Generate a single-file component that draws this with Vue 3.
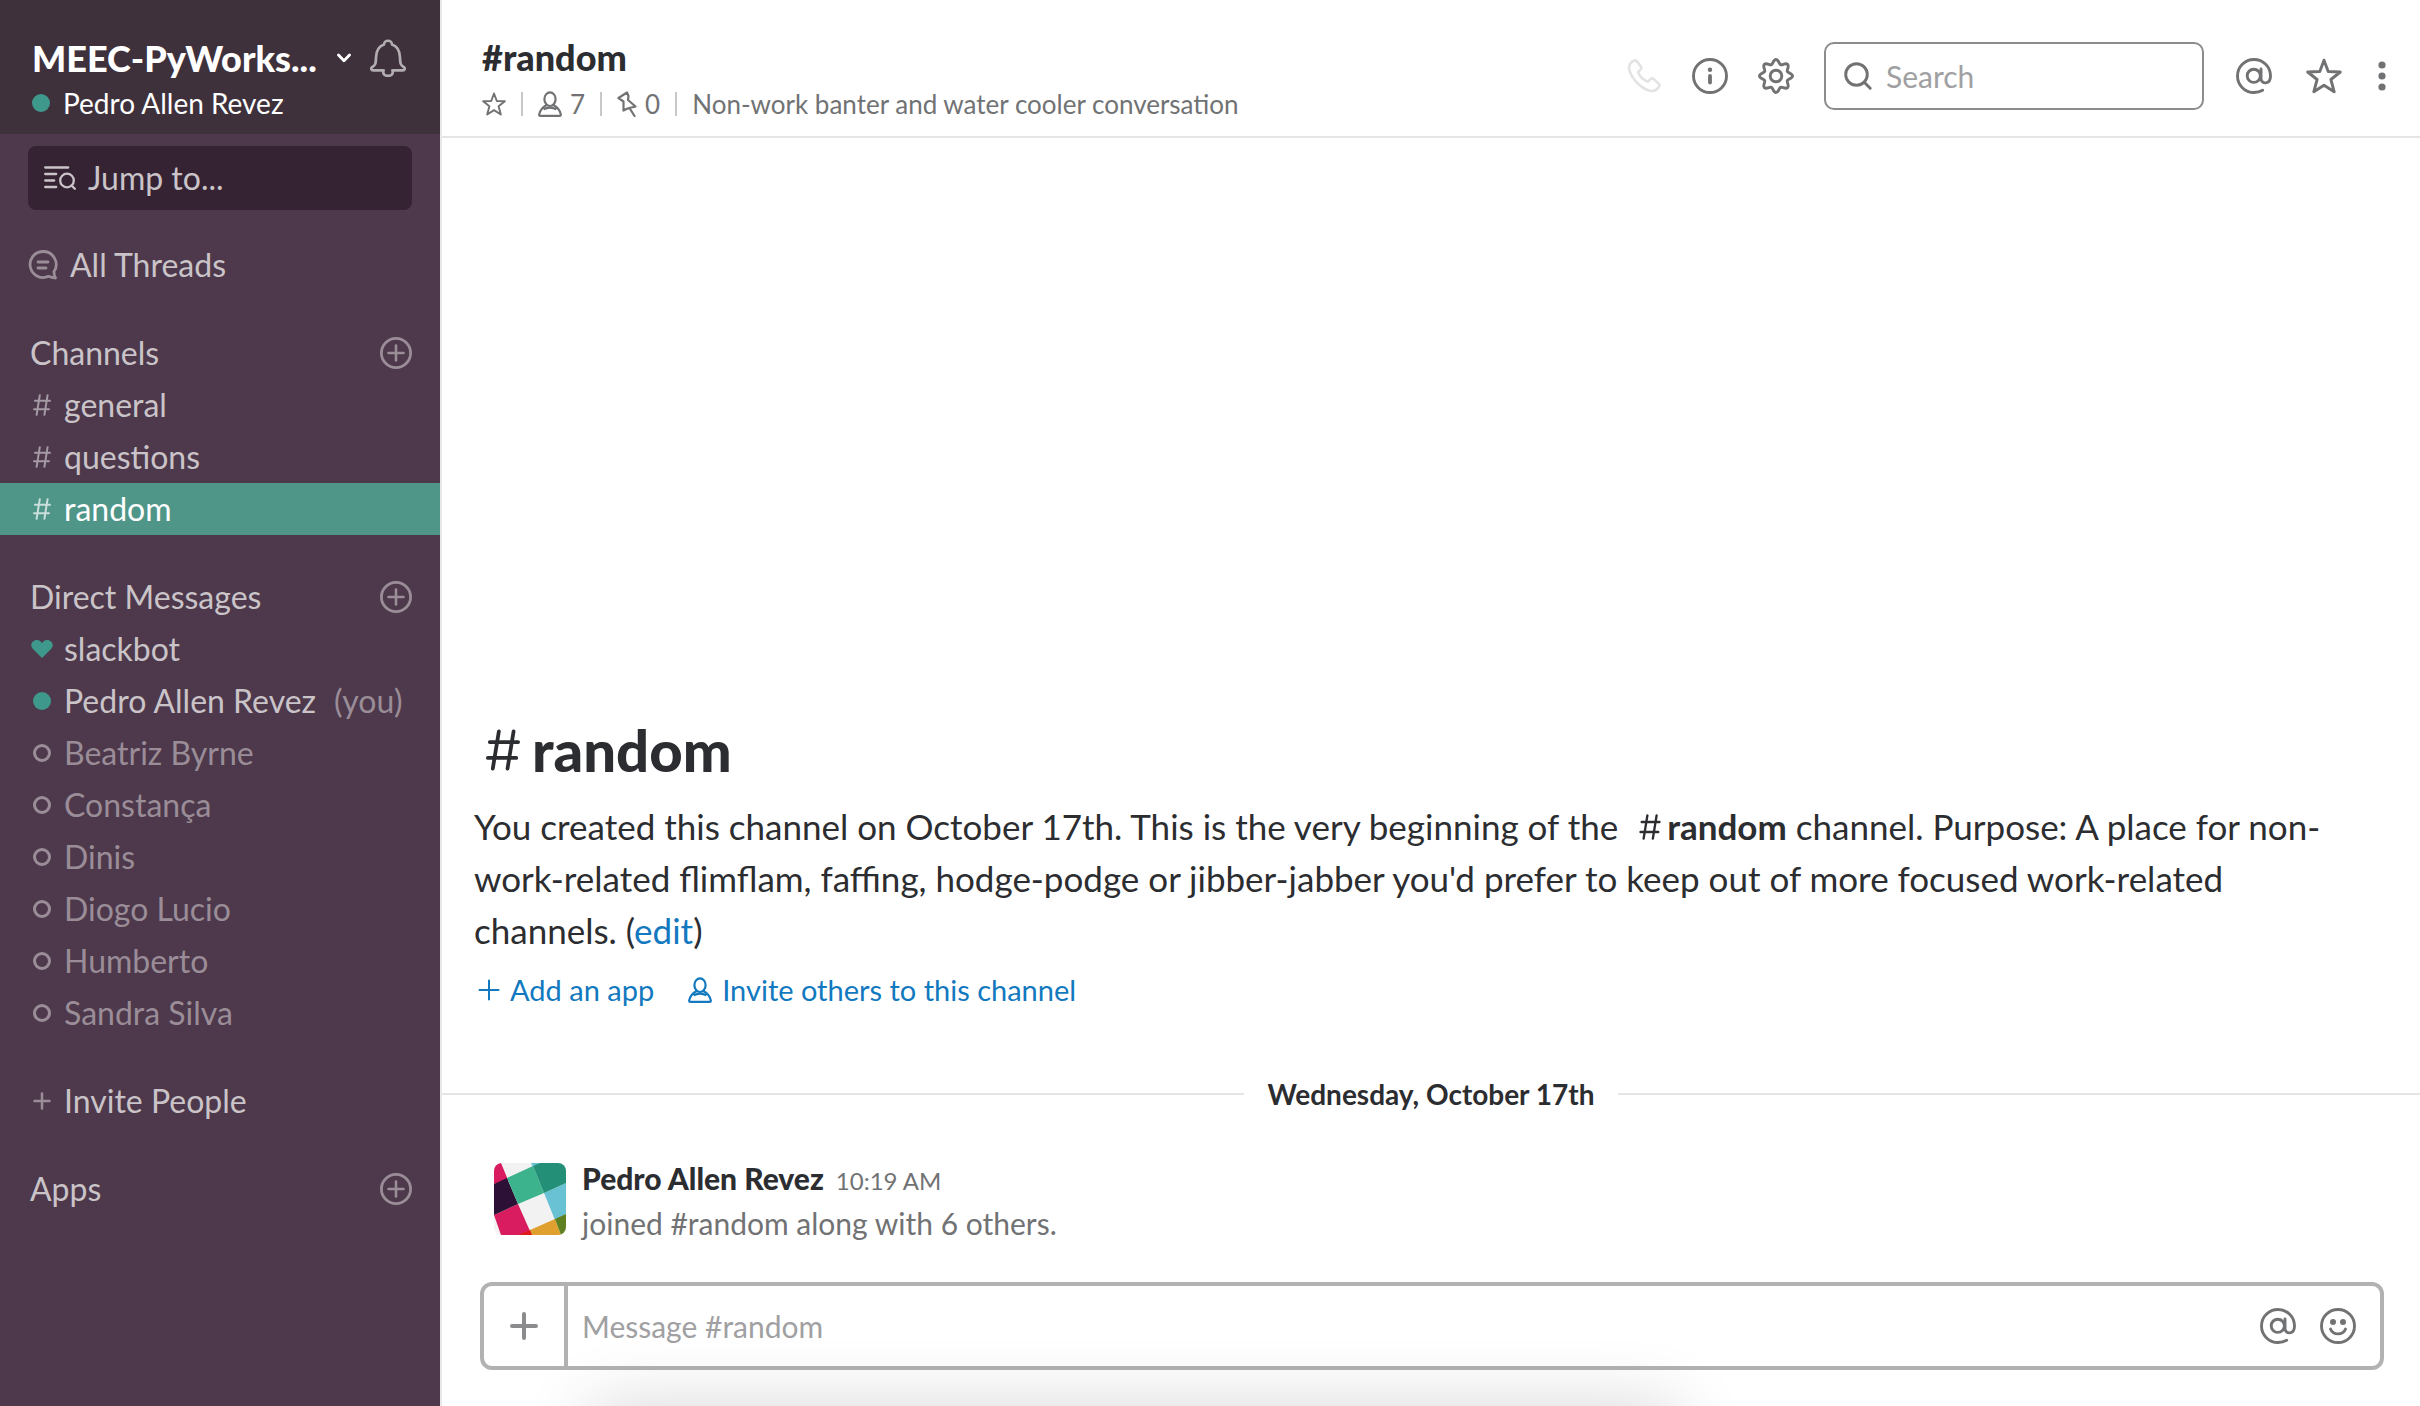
<script setup>
const channels = ['general', 'questions', 'random']
const activeChannel = 'random'
const people = ['Beatriz Byrne', 'Constança', 'Dinis', 'Diogo Lucio', 'Humberto', 'Sandra Silva']
</script>

<template>
  <div class="app">
    <svg class="sprite" aria-hidden="true">
      <symbol id="plus-circle" viewBox="0 0 32 32">
        <g fill="none" stroke="currentColor" stroke-linecap="round">
          <circle cx="16" cy="16" r="14.6" stroke-width="2.8" />
          <path d="M16 8.500v15M8.500 16h15" stroke-width="2.6" />
        </g>
      </symbol>
      <symbol id="hash" viewBox="0 0 18 22">
        <path d="M6.8 1.200 3.600 20.800M14.600 1.200 11.400 20.800M2 6.800h15M1 15.200h15" fill="none" stroke="currentColor" stroke-width="2" stroke-linecap="round" />
      </symbol>
      <symbol id="person" viewBox="0 0 24 26">
        <g fill="none" stroke="currentColor" stroke-width="2.200" stroke-linejoin="round">
          <ellipse cx="12" cy="8.200" rx="5.600" ry="6.800" />
          <path d="M8.600 14C4.600 16.200 2 19.200 1.200 23.400q-.2 1.400 1.200 1.400h19.200q1.400 0 1.200-1.400C22 19.200 19.400 16.200 15.400 14M5.600 18.400q6.400-3.400 12.800 0" />
        </g>
      </symbol>
      <symbol id="at" viewBox="0 0 36 36">
        <g fill="none" stroke="currentColor" stroke-width="2.900" stroke-linecap="round">
          <circle cx="17.800" cy="17.800" r="6.600" />
          <path d="M25 11v9.500c0 6 9.500 6.500 9.500-2.500A16.500 16.500 0 1 0 18 34.500q4.800 0 8.700-2.200" />
        </g>
      </symbol>
      <symbol id="star" viewBox="0 0 36 36">
        <path d="M18 2.200 22.200 13.500 34.300 14 24.900 21.500 28.200 33.800 18 27.200 7.800 33.800 11.100 21.500 1.700 14 13.800 13.500Z" fill="none" stroke="currentColor" stroke-width="2.900" stroke-linejoin="round" />
      </symbol>
    </svg>

    <aside class="sidebar">
      <header class="team">
        <div class="team-row">
          <button class="team-name" type="button">
            <span>MEEC-PyWorks...</span>
            <svg class="chevron" viewBox="0 0 14 10"><path d="M1.500 2 7 7.800 12.500 2" fill="none" stroke="currentColor" stroke-width="2.800" stroke-linecap="round" stroke-linejoin="round" /></svg>
          </button>
          <button class="bell" type="button" aria-label="Notifications">
            <svg viewBox="0 0 36 38"><path d="M13.400 34.200c.8 3.400 8.400 3.400 9.200 0M13.600 31.300H3.200c-2.200 0-2.600-2.200-.8-3.300 3.600-2 3.400-5 3.600-9.500C6.200 11.500 9 7.200 14 5.500c0-5 8-5 8 0 5 1.700 7.800 6 8 13 .2 4.500 0 7.500 3.600 9.500 1.800 1.100 1.400 3.300-.8 3.300H22.400M13.600 31.300q-.6 1.500-.2 2.900M22.400 31.300q.6 1.500.2 2.900" fill="none" stroke="currentColor" stroke-width="2.700" stroke-linecap="round" stroke-linejoin="round" /></svg>
          </button>
        </div>
        <div class="me"><i class="dot"></i><span>Pedro Allen Revez</span></div>
      </header>

      <button class="jump" type="button">
        <svg viewBox="0 0 32 24"><g fill="none" stroke="currentColor" stroke-width="2.300" stroke-linecap="round"><path d="M1.200 1.500h23M1.200 8h11M1.200 14.500h9M1.200 21h11M27.500 19.500 30.800 22.800" /><circle cx="23" cy="14.500" r="6.800" /></g></svg>
        <span>Jump to...</span>
      </button>

      <a class="threads" href="#threads">
        <svg viewBox="0 0 30 30"><g fill="none" stroke="currentColor" stroke-width="2.800" stroke-linecap="round" stroke-linejoin="round"><path d="M14.500 1.500a13 13 0 1 0 6 24.800q3.200 1.600 7 1.700-1.500-2.600-1.600-6.200A13 13 0 0 0 14.500 1.500Z" /><path d="M10 12h10M10 18h8" /></g></svg>
        <span>All Threads</span>
      </a>

      <nav class="group" aria-label="Channels">
        <div class="group-head">
          <h2>Channels</h2>
          <button type="button" aria-label="Add a channel"><svg><use href="#plus-circle" /></svg></button>
        </div>
        <a v-for="name in channels" :key="name" class="item" :class="{ active: name === activeChannel }" :href="'#' + name">
          <span class="mark"><svg class="hash"><use href="#hash" /></svg></span><span>{{ name }}</span>
        </a>
      </nav>

      <nav class="group" aria-label="Direct Messages">
        <div class="group-head">
          <h2>Direct Messages</h2>
          <button type="button" aria-label="New direct message"><svg><use href="#plus-circle" /></svg></button>
        </div>
        <a class="item" href="#slackbot">
          <span class="mark"><svg class="heart" viewBox="0 0 22 18"><path d="M11 18 1.500 8.500C-1.800 4.500 2 0 5.600 0 8.500 0 10.200 1.500 11 3.300 11.800 1.500 13.500 0 16.400 0 20 0 23.800 4.500 20.500 8.500Z" fill="currentColor" /></svg></span><span>slackbot</span>
        </a>
        <a class="item" href="#me">
          <span class="mark"><i class="dot"></i></span><span>Pedro Allen Revez</span><span class="you">(you)</span>
        </a>
        <a v-for="name in people" :key="name" class="item away" :href="'#' + name">
          <span class="mark"><i class="ring"></i></span><span>{{ name }}</span>
        </a>
      </nav>

      <div class="group">
        <a class="item" href="#invite">
          <span class="mark"><svg class="plus" viewBox="0 0 18 18"><path d="M9 1.500v15M1.500 9h15" fill="none" stroke="currentColor" stroke-width="2.500" stroke-linecap="round" /></svg></span><span>Invite People</span>
        </a>
      </div>

      <div class="group">
        <div class="group-head">
          <h2>Apps</h2>
          <button type="button" aria-label="Add an app"><svg><use href="#plus-circle" /></svg></button>
        </div>
      </div>
    </aside>

    <main class="main">
      <header class="topbar">
        <div class="channel">
          <h1>#random</h1>
          <div class="meta">
            <button type="button" aria-label="Star channel"><svg class="mini-star"><use href="#star" /></svg></button>
            <i class="bar"></i>
            <button type="button"><svg class="mini-person"><use href="#person" /></svg>7</button>
            <i class="bar"></i>
            <button type="button"><svg class="mini-pin" viewBox="0 0 20 26"><path d="M1.500 7 10 1.500 11.500 5 11 9 18.500 15.500 10.500 17.500 6.500 19.500 6.500 10.500ZM12.500 17 17.500 25" fill="none" stroke="currentColor" stroke-width="2.200" stroke-linejoin="round" stroke-linecap="round" /></svg>0</button>
            <i class="bar"></i>
            <span>Non-work banter and water cooler conversation</span>
          </div>
        </div>
        <div class="tools">
          <button class="call" type="button" aria-label="Call"><svg viewBox="0 0 36 36"><path d="M7.500 2.800C4 4.800 2.400 8 3.400 12 6 21 14 29.500 23 32.500c5 1.500 8-.5 10-4 .8-1.400.5-2.200-.6-3.200L27.500 21c-1.200-1-2-.8-3 .2l-2.500 2.500C17 22 13.500 18 12 14l2.500-2.400c1-1 1.200-1.700.4-3L11 3.400C10 2 9 1.900 7.500 2.800Z" fill="none" stroke="currentColor" stroke-width="2.600" stroke-linejoin="round" /></svg></button>
          <button type="button" aria-label="Channel details"><svg viewBox="0 0 36 36"><circle cx="18" cy="18" r="16.500" fill="none" stroke="currentColor" stroke-width="2.900" /><circle cx="18" cy="11.800" r="2.200" fill="currentColor" /><path d="M18 18v6.500" stroke="currentColor" stroke-width="3.800" stroke-linecap="round" /></svg></button>
          <button type="button" aria-label="Settings"><svg viewBox="0 0 36 36"><g fill="none" stroke="currentColor" stroke-width="2.900" stroke-linejoin="round"><circle cx="18" cy="18" r="5.800" /><path d="M18 1.500c2.800 0 2.800 4.500 4.600 5.200s5-2.300 7 -.3-1 5.200-.3 7 5.200 1.800 5.200 4.600-4.500 2.800-5.200 4.600 2.300 5 .3 7-5.200-1-7-.3-1.800 5.200-4.600 5.200-2.800-4.500-4.600-5.200-5 2.300-7 .3 1-5.200.3-7-5.200-1.800-5.200-4.600 4.500-2.800 5.200-4.600-2.300-5-.3-7 5.200 1 7 .3 1.800-5.200 4.600-5.200Z" /></g></svg></button>
          <label class="search">
            <svg viewBox="0 0 28 28"><g fill="none" stroke="currentColor" stroke-width="2.900" stroke-linecap="round"><circle cx="12.500" cy="12.500" r="10.800" /><path d="M20.500 20.500 26.200 26.200" /></g></svg>
            <input type="text" placeholder="Search" aria-label="Search" />
          </label>
          <button class="mentions" type="button" aria-label="Mentions"><svg><use href="#at" /></svg></button>
          <button class="starred" type="button" aria-label="Starred items"><svg><use href="#star" /></svg></button>
          <button class="more" type="button" aria-label="More"><svg viewBox="0 0 8 30"><g fill="currentColor"><circle cx="4" cy="4" r="3.600" /><circle cx="4" cy="15" r="3.600" /><circle cx="4" cy="26" r="3.600" /></g></svg></button>
        </div>
      </header>

      <section class="messages">
        <div class="intro">
          <h2><svg><use href="#hash" /></svg>random</h2>
          <p>You created this channel on October 17th. This is the very beginning of the <b><svg><use href="#hash" /></svg>random</b> channel. Purpose: A place for non-work-related flimflam, faffing, hodge-podge or jibber-jabber you'd prefer to keep out of more focused work-related channels. (<a href="#edit">edit</a>)</p>
          <div class="actions">
            <a href="#add-app"><svg class="add" viewBox="0 0 22 22"><path d="M11 1.500v19M1.500 11h19" fill="none" stroke="currentColor" stroke-width="2" stroke-linecap="round" /></svg>Add an app</a>
            <a href="#invite-others"><svg class="invite"><use href="#person" /></svg>Invite others to this channel</a>
          </div>
        </div>

        <div class="divider"><span>Wednesday, October 17th</span></div>

        <article class="message">
          <svg class="avatar" viewBox="0 0 72 72">
            <path fill="#f2f2f2" d="M0 0h72v72H0z" />
            <path fill="#d91c5f" d="M0 0h7l7 17L0 21zM0 52 24 41 36 68 38 72H7z" />
            <path fill="#2d1036" d="M0 21 13 15 24 41 0 52z" />
            <path fill="#3cb28d" d="M13 15 39 3 50 30 24 41z" />
            <path fill="#69c2d3" d="M37 0h9L39 4zM50 30 72 20V51L61 57z" />
            <path fill="#228f76" d="M39 3 46 0H72V20L50 30z" />
            <path fill="#e0a02f" d="M36 67 61 56 67 72H36z" />
            <path fill="#5f8020" d="M61 56 72 51V72H67z" />
            <path fill="#e01a1a" d="M24 72 36 67 38 72z" />
          </svg>
          <div>
            <div class="byline"><b>Pedro Allen Revez</b><time>10:19 AM</time></div>
            <div class="text">joined #random along with 6 others.</div>
          </div>
        </article>
      </section>

      <form class="composer" @submit.prevent>
        <button class="attach" type="button" aria-label="Attach"><svg viewBox="0 0 28 28"><path d="M14 2v24M2 14h24" fill="none" stroke="currentColor" stroke-width="4" stroke-linecap="round" /></svg></button>
        <input type="text" placeholder="Message #random" aria-label="Message #random" />
        <button type="button" aria-label="Mention someone"><svg><use href="#at" /></svg></button>
        <button type="button" aria-label="Emoji"><svg viewBox="0 0 36 36"><g fill="none" stroke="currentColor" stroke-width="2.900" stroke-linecap="round"><circle cx="18" cy="18" r="16.500" /><path d="M10.500 21c2.500 6.500 12.500 6.500 15 0" /></g><g fill="currentColor"><circle cx="13" cy="14" r="3" /><circle cx="23" cy="14" r="3" /></g></svg></button>
      </form>
      <div class="shade"></div>
    </main>
  </div>
</template>

<style>
body {
  background: #fff;
}
</style>

<style scoped>
.app {
  display: flex;
  min-height: 100vh;
  font-family: Lato, "Noto Sans", sans-serif;
  color: #2c2d30;
}
.app * {
  box-sizing: border-box;
}
.sprite {
  position: absolute;
  width: 0;
  height: 0;
}
button {
  display: flex;
  align-items: center;
  padding: 0;
  border: 0;
  background: none;
  color: inherit;
  font: inherit;
}
svg {
  display: block;
  flex: none;
}
a {
  color: #1279bf;
  text-decoration: none;
}
h1,
h2,
p {
  margin: 0;
}
input {
  flex: 1;
  min-width: 0;
  padding: 0;
  border: 0;
  outline: 0;
  background: none;
  font: inherit;
}
input::placeholder {
  color: #a0a0a2;
  opacity: 1;
}

.sidebar {
  flex: 0 0 440px;
  background: #4d394b;
  color: #cac4c9;
  font-size: 32px;
  line-height: 52px;
}
.team {
  height: 134px;
  padding: 35px 34px 0 32px;
  background: #3e313c;
  color: #fff;
}
.team-row {
  display: flex;
  justify-content: space-between;
  height: 46px;
}
.team-name {
  gap: 20px;
  font-size: 36px;
  font-weight: 900;
  line-height: 46px;
}
.chevron {
  width: 14px;
  height: 10px;
}
.bell {
  color: #b2adb1;
}
.bell svg {
  width: 36px;
  height: 38px;
}
.me {
  display: flex;
  align-items: center;
  gap: 13px;
  font-size: 28px;
  line-height: 44px;
}
.dot,
.ring {
  width: 18px;
  height: 18px;
  border-radius: 50%;
}
.dot {
  background: #3f988c;
}
.ring {
  border: 3px solid #9a8d98;
}
.jump {
  width: 384px;
  height: 64px;
  margin: 12px 28px 0;
  padding: 0 16px;
  gap: 12px;
  border-radius: 8px;
  background: #352333;
}
.jump svg {
  width: 32px;
  height: 24px;
}
.threads {
  display: flex;
  align-items: center;
  gap: 12px;
  margin-top: 29px;
  padding: 0 28px;
  color: inherit;
}
.threads svg {
  width: 30px;
  height: 30px;
  color: #9a8d98;
}
.group {
  margin-top: 36px;
}
.group-head {
  display: flex;
  align-items: center;
  justify-content: space-between;
  height: 52px;
  padding: 0 28px 0 30px;
}
.group-head h2 {
  font-size: 32px;
  font-weight: 400;
}
.group-head button {
  color: #9a8d98;
}
.group-head svg {
  width: 32px;
  height: 32px;
}
.item {
  display: flex;
  align-items: center;
  height: 52px;
  padding-left: 30px;
  gap: 10px;
  color: inherit;
}
.item.active {
  background: #4f9689;
  color: #fff;
}
.item.away {
  color: #9a8d98;
}
.mark {
  display: flex;
  justify-content: center;
  width: 24px;
}
.mark .hash {
  width: 18px;
  height: 22px;
  opacity: 0.7;
}
.mark .heart {
  width: 22px;
  height: 18px;
  color: #3f988c;
}
.mark .plus {
  width: 18px;
  height: 18px;
  color: #9a8d98;
}
.you {
  margin-left: 8px;
  color: #9a8d98;
}

.main {
  position: relative;
  display: flex;
  flex: 1;
  flex-direction: column;
  min-width: 0;
  border-left: 2px solid #e8e8e8;
  background: #fff;
}
.topbar {
  display: flex;
  justify-content: space-between;
  height: 138px;
  padding: 36px 28px 0 40px;
  border-bottom: 2px solid #e5e5e5;
}
.channel h1 {
  font-size: 36px;
  font-weight: 900;
  line-height: 42px;
}
.meta {
  display: flex;
  align-items: center;
  gap: 15px;
  color: #717274;
  font-size: 26px;
  line-height: 52px;
}
.meta button {
  gap: 8px;
}
.mini-star {
  width: 24px;
  height: 24px;
}
.mini-person {
  width: 24px;
  height: 26px;
}
.mini-pin {
  width: 20px;
  height: 26px;
}
.bar {
  width: 2px;
  height: 24px;
  background: #c8c8c8;
}
.tools {
  display: flex;
  align-items: center;
  height: 80px;
  color: #717274;
}
.tools button {
  margin-right: 30px;
}
.tools button svg {
  width: 36px;
  height: 36px;
}
.tools .call {
  color: #e3e3e4;
}
.search {
  display: flex;
  align-items: center;
  gap: 14px;
  width: 380px;
  height: 68px;
  padding: 0 18px;
  margin-right: 32px;
  border: 2px solid #8c8c8e;
  border-radius: 10px;
  font-size: 30px;
}
.search svg {
  width: 28px;
  height: 28px;
}
.tools .mentions {
  margin-right: 34px;
}
.tools .starred {
  margin-right: 36px;
}
.tools .more {
  margin-right: 6px;
}
.tools .more svg {
  width: 8px;
  height: 30px;
}
.messages {
  display: flex;
  flex: 1;
  flex-direction: column;
  justify-content: flex-end;
}
.intro {
  padding: 0 60px 0 32px;
}
.intro h2 {
  display: flex;
  align-items: center;
  gap: 12px;
  padding-left: 12px;
  font-size: 58px;
  font-weight: 900;
  line-height: 80px;
}
.intro h2 svg {
  width: 34px;
  height: 42px;
}
.intro p {
  margin-top: 10px;
  font-size: 35px;
  line-height: 52px;
}
.intro b {
  margin-left: 12px;
}
.intro b svg {
  display: inline-block;
  width: 22px;
  height: 26px;
  margin-right: 6px;
}
.actions {
  display: flex;
  gap: 34px;
  font-size: 29px;
  line-height: 44px;
  padding: 12px 0 0 4px;
}
.actions a {
  display: flex;
  align-items: center;
  gap: 10px;
}
.add {
  width: 22px;
  height: 22px;
}
.invite {
  width: 24px;
  height: 26px;
}
.divider {
  display: flex;
  align-items: center;
  gap: 24px;
  margin-top: 60px;
  font-size: 28px;
  font-weight: 700;
  line-height: 44px;
}
.divider::before,
.divider::after {
  content: "";
  flex: 1;
  height: 2px;
  background: #e5e5e5;
}
.message {
  display: flex;
  gap: 16px;
  padding: 42px 52px 37px;
}
.avatar {
  width: 72px;
  height: 72px;
  margin-top: 5px;
  border-radius: 8px;
}
.byline {
  display: flex;
  align-items: baseline;
  gap: 12px;
  line-height: 40px;
}
.byline b {
  font-size: 30px;
  font-weight: 900;
}
.byline time {
  color: #717274;
  font-size: 24px;
}
.text {
  color: #717274;
  font-size: 30px;
  line-height: 44px;
}
.composer {
  display: flex;
  align-items: center;
  gap: 24px;
  height: 88px;
  margin: 0 36px 36px 38px;
  padding-right: 24px;
  border: 4px solid #b2b2b2;
  border-radius: 12px;
  color: #717274;
  font-size: 30px;
}
.composer input {
  margin-left: -10px;
}
.composer svg {
  width: 36px;
  height: 36px;
}
.attach {
  align-self: stretch;
  justify-content: center;
  width: 84px;
  border-right: 4px solid #b2b2b2;
  color: #8c8c8e;
}
.composer .attach svg {
  width: 28px;
  height: 28px;
}
.shade {
  position: absolute;
  right: 0;
  bottom: 0;
  left: 0;
  height: 120px;
  overflow: hidden;
  pointer-events: none;
}
.shade::after {
  content: "";
  position: absolute;
  top: 130px;
  right: 38%;
  left: 8%;
  height: 60px;
  box-shadow: 0 0 70px 10px rgba(0, 0, 0, 0.16);
}
</style>
